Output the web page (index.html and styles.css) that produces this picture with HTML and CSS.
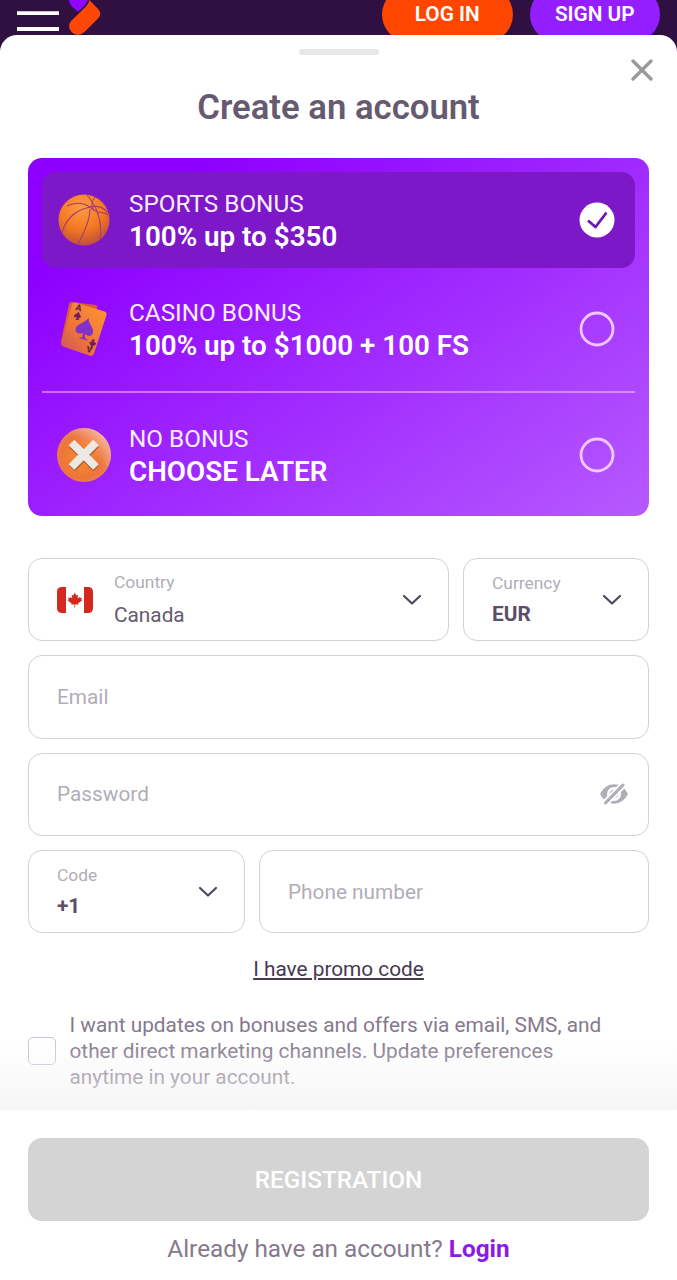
FILE: index.html
```html
<!DOCTYPE html>
<html lang="en">
<head>
<meta charset="utf-8">
<title>Create an account</title>
<link rel="stylesheet" href="styles.css">
</head>
<body>
<div class="page">
  <header class="topbar">
    <div class="brand">
      <svg class="menu" width="42" height="35" viewBox="0 0 42 35"><path d="M0 13.1H42M0 29H42" stroke="#fff" stroke-width="3.8"/></svg>
      <svg class="logo" width="34" height="35" viewBox="0 0 34 35">
        <path d="M1 0H19.5C19 3.5 15.5 7.5 10 11.5C5 8 1.5 4.5 1 0Z" fill="#8f05ff"/>
        <path d="M21.5 0L30.5 9.5Q34.2 14 30 18.5L16.5 32Q9.5 38 3.5 32Q-1 26.500 3 21L18 6.500Q21 3.500 21.500 0Z" fill="#ff4705"/>
      </svg>
    </div>
    <div class="actions">
      <button class="pill pill-login"><span>LOG IN</span></button>
      <button class="pill pill-signup"><span>SIGN UP</span></button>
    </div>
  </header>

  <main class="sheet">
    <div class="grabber"></div>
    <button class="close" aria-label="Close"><svg width="22" height="22" viewBox="0 0 22 22"><path d="M2 2L20 20M20 2L2 20" stroke="#999" stroke-width="3.3" stroke-linecap="round"/></svg></button>
    <h1 class="title"><span>Create an account</span></h1>

    <section class="bonuses">
      <div class="bonus bonus-active">
        <svg class="bonus-icon" width="56" height="56" viewBox="0 0 56 56">
          <defs><radialGradient id="ball" cx=".45" cy=".25" r=".8"><stop offset="0" stop-color="#ff9a45"/><stop offset=".55" stop-color="#f37a20"/><stop offset="1" stop-color="#b94742"/></radialGradient></defs>
          <circle cx="28" cy="28" r="25.500" fill="url(#ball)"/>
          <g fill="none" stroke="#a43b78" stroke-width="1.100">
            <path d="M6 41C9 28 19 18 34 15C42 13 49 16 52 21"/>
            <path d="M31 3C40 13 47 29 44 47"/>
            <path d="M39 5C34 12 35 18 42 20C47 21 50 21 52 23"/>
            <path d="M11 14C20 9 31 11 37 18"/>
            <path d="M34 17C34 30 27 41 22 53"/>
          </g>
        </svg>
        <div class="bonus-text"><div class="bonus-name">SPORTS BONUS</div><div class="bonus-value">100% up to $350</div></div>
        <svg class="radio" width="36" height="36" viewBox="0 0 36 36"><circle cx="18" cy="18" r="17.500" fill="#fff"/><path d="M9.800 19.300L16.500 25L26.800 11.500" fill="none" stroke="#6b17ba" stroke-width="2.800" stroke-linecap="round" stroke-linejoin="round"/></svg>
      </div>
      <div class="bonus">
        <svg class="bonus-icon" width="56" height="56" viewBox="0 0 56 56">
          <defs><linearGradient id="card" x1="1" y1="0" x2="0" y2="1"><stop offset="0" stop-color="#ff9833"/><stop offset=".6" stop-color="#ef7438"/><stop offset="1" stop-color="#c94e64"/></linearGradient></defs>
          <path d="M15 1L40 4Q42 5 41 8L34 50L6 43Q4.500 42 5 40L13 3Q13.500 1 15 1Z" fill="#d95b3c"/>
          <path d="M19 1.500L48.500 10.500Q51 11.500 50.500 14L38 52.500Q37 55.500 34 54.800L7 45.500Q4.500 44.500 5.500 41.500L16 3Q17 1 19 1.500Z" fill="url(#card)"/>
          <path d="M32.500 17C33 25 39 27 36.500 33C35 36 31 35 29 33L29 37L33 40L22.500 37L26.500 36L27 32C24 33 20 33 19.500 29C19 23 29 22 32.500 17Z" fill="#8232c8"/>
          <path d="M23 10.500C23 14 25.500 14 24.500 17L22.500 17L23 19H19.500L21 16.500L18 16C17.500 13 21 13 23 10.500ZM35.500 47C35 43 32.500 43 34 40.500L36 41L35.500 38.500H39L38 41L40 42C40 45 37 44 35.500 47Z" fill="#702060"/>
          <text class="card-letter" x="19" y="9" transform="rotate(14 19 9)">A</text>
          <text class="card-letter" x="37" y="46" transform="rotate(194 37 46)">A</text>
        </svg>
        <div class="bonus-text"><div class="bonus-name">CASINO BONUS</div><div class="bonus-value wide">100% up to $1000 + 100 FS</div></div>
        <svg class="radio" width="36" height="36" viewBox="0 0 36 36"><circle cx="18" cy="18" r="16" fill="none" stroke="#f0c8ff" stroke-width="2.800"/></svg>
      </div>
      <div class="divider"></div>
      <div class="bonus">
        <svg class="bonus-icon" width="56" height="56" viewBox="0 0 56 56">
          <defs><radialGradient id="coin" cx=".45" cy=".55" r=".58"><stop offset="0" stop-color="#f58d32"/><stop offset=".65" stop-color="#ee7438"/><stop offset="1" stop-color="#e9875f"/></radialGradient><linearGradient id="shine" x1=".4" y1=".7" x2=".95" y2=".15"><stop offset=".4" stop-color="#fff" stop-opacity="0"/><stop offset="1" stop-color="#fff" stop-opacity=".45"/></linearGradient></defs>
          <circle cx="28" cy="28" r="27" fill="url(#coin)"/><circle cx="28" cy="28" r="27" fill="url(#shine)"/>
          <path d="M16 17.500L40 41.500M40 17.500L16 41.500" stroke="#b65b2c" stroke-width="8"/>
          <path d="M15.500 15.500L40 40M40 15.500L15.500 40" stroke="#ece9e5" stroke-width="8"/>
        </svg>
        <div class="bonus-text"><div class="bonus-name">NO BONUS</div><div class="bonus-value">CHOOSE LATER</div></div>
        <svg class="radio" width="36" height="36" viewBox="0 0 36 36"><circle cx="18" cy="18" r="16" fill="none" stroke="#f0c8ff" stroke-width="2.800"/></svg>
      </div>
    </section>

    <form class="form">
      <div class="row">
        <div class="field country">
          <svg class="flag" width="36" height="26" viewBox="0 0 36 26"><path d="M5 0H9V26H5Q0 26 0 21V5Q0 0 5 0ZM27 0H31Q36 0 36 5V21Q36 26 31 26H27Z" fill="#d5281f"/><path d="M17.800 5.500L19.300 8.500L21 7.800L20.500 11.500L22.300 10L23 11L25 10.700L24.300 12.600L25 13.500L21 16.500L21.300 17.800L18.200 17.300V20.500H17.400V17.300L14.300 17.800L14.600 16.500L10.800 13.500L11.600 12.600L11 10.700L12.800 11L13.500 10L15.200 11.500L14.700 7.800L16.300 8.500Z" fill="#d5281f"/></svg>
          <div class="field-text"><span class="label">Country</span><span class="value">Canada</span></div>
          <svg class="chevron" width="20" height="12" viewBox="0 0 20 12"><path d="M2 2L10 9.500L18 2" fill="none" stroke="#51475d" stroke-width="2.200" stroke-linecap="round" stroke-linejoin="round"/></svg>
        </div>
        <div class="field currency">
          <div class="field-text"><span class="label">Currency</span><span class="value strong">EUR</span></div>
          <svg class="chevron" width="20" height="12" viewBox="0 0 20 12"><path d="M2 2L10 9.500L18 2" fill="none" stroke="#51475d" stroke-width="2.200" stroke-linecap="round" stroke-linejoin="round"/></svg>
        </div>
      </div>
      <div class="field"><span class="placeholder">Email</span></div>
      <div class="field">
        <span class="placeholder">Password</span>
        <svg class="eye" width="28" height="22" viewBox="0 0 28 22">
          <path d="M0 11Q5 1.300 14 1.300T28 11Q23 20.700 14 20.700T0 11Z" fill="#b1adb7"/>
          <circle cx="14" cy="11" r="7" fill="#fff"/>
          <circle cx="14" cy="11" r="4.300" fill="#b1adb7"/>
          <path d="M3.500 18.500L21 0.500M7.500 21.500L25 3.500" stroke="#fff" stroke-width="1.800"/>
          <path d="M5.500 20L23 2" stroke="#b1adb7" stroke-width="3" stroke-linecap="round"/>
        </svg>
      </div>
      <div class="row">
        <div class="field code">
          <div class="field-text"><span class="label">Code</span><span class="value strong">+1</span></div>
          <svg class="chevron" width="20" height="12" viewBox="0 0 20 12"><path d="M2 2L10 9.500L18 2" fill="none" stroke="#51475d" stroke-width="2.200" stroke-linecap="round" stroke-linejoin="round"/></svg>
        </div>
        <div class="field phone"><span class="placeholder">Phone number</span></div>
      </div>
    </form>

    <a class="promo"><span>I have promo code</span></a>
    <div class="consent">
      <span class="checkbox"></span>
      <p class="consent-text">I want updates on bonuses and offers via email, SMS, and<br>other direct marketing channels. Update preferences<br>anytime in your account.</p>
    </div>
  </main>

  <footer class="footer">
    <button class="register"><span>REGISTRATION</span></button>
    <p class="signin"><span>Already have an account? <b>Login</b></span></p>
  </footer>
</div>
</body>
</html>
```
FILE: styles.css
```css
* { box-sizing: border-box; }
body { margin: 0; background: #2f1040; font-family: Roboto, "Liberation Sans", sans-serif; }
button { border: 0; padding: 0; background: none; font-family: inherit; }
svg { display: block; flex: none; }
p, h1 { margin: 0; }
.page { width: 677px; height: 1280px; overflow: hidden; display: flex; flex-direction: column; }

.topbar { height: 35px; flex: none; overflow: hidden; display: flex; justify-content: space-between; padding: 0 17px; }
.brand { display: flex; gap: 9px; }
.actions { display: flex; gap: 17px; align-items: flex-end; margin-bottom: -7px; }
.pill { width: 130.500px; height: 55px; border-radius: 28px; color: #fff; font-size: 20.800px; font-weight: 600; line-height: 55px; }
.pill-login { background: #ff4600; }
.pill-signup { background: #931eff; }

.sheet { position: relative; height: 1075px; flex: none; background: #fff; border-radius: 17px 17px 0 0; padding: 14px 28px 0; display: flex; flex-direction: column; overflow: hidden; }
.sheet::after { content: ""; position: absolute; left: 0; right: 0; bottom: 0; height: 70px; background: linear-gradient(rgba(245,245,245,0), rgba(243,243,243,.8)); }
.grabber { width: 80px; height: 6px; border-radius: 3px; background: #e7e6e9; align-self: center; flex: none; }
.close { position: absolute; top: 24px; right: 24px; }
.title { margin-top: 31px; height: 43px; line-height: 43px; text-align: center; font-size: 34.700px; font-weight: 600; color: #665a70; }

.bonuses { margin-top: 29px; height: 358px; flex: none; border-radius: 14px; padding: 14px; background: linear-gradient(145deg, #8d00ff 16%, #b65aff 100%); display: flex; flex-direction: column; }
.bonus { height: 95.500px; flex: none; border-radius: 14px; padding: 0 20px 0 14px; display: flex; align-items: center; color: #fff; }
.bonus-active { background: #7d18c8; margin-bottom: 14px; }
.bonus-text { margin-left: 17px; flex: 1; white-space: nowrap; }
.bonus-name { font-size: 24.300px; line-height: 33px; font-weight: 400; color: #fbeeff; }
.bonus-value { font-size: 27.800px; line-height: 33px; font-weight: 600; }
.divider { height: 2px; flex: none; background: rgba(255,205,255,.5); margin: 14px 0 14px; }
.card-letter { font-size: 9px; font-weight: 700; fill: #60204e; }

.form { margin-top: 42px; display: flex; flex-direction: column; gap: 14px; flex: none; }
.row { display: flex; gap: 14px; }
.field { height: 83.300px; border: 1.700px solid #d2d1d4; border-radius: 14px; padding: 0 28px; display: flex; align-items: center; white-space: nowrap; }
.country { width: 421px; }
.currency { flex: 1; }
.code { width: 217px; }
.phone { flex: 1; }
.flag { margin-right: 21px; }
.field-text { flex: 1; display: flex; flex-direction: column; }
.label { font-size: 17.400px; line-height: 22px; color: #b1adb7; }
.value { font-size: 20.800px; line-height: 26px; margin-top: 9px; color: #655b70; }
.strong { font-weight: 700; color: #5b4e68; margin-top: 7px; }
.chevron { margin-right: -2px; }
.placeholder { font-size: 20.800px; color: #b1adb7; flex: 1; }
.eye { margin-right: -8px; }

.promo { margin-top: 23px; height: 26px; line-height: 26px; text-align: center; font-size: 20.800px; color: #453a50; text-decoration: underline; }
.consent { margin-top: 30px; display: flex; align-items: center; gap: 14px; }
.consent-text { font-size: 20.800px; line-height: 26px; color: #85798d; white-space: nowrap; }
.checkbox { width: 27.500px; height: 27.500px; border: 1.700px solid #c6c6d5; border-radius: 5px; background: #fff; flex: none; }

.footer { flex: 1; background: #fff; padding: 28px 28px 0; }
.register { display: block; width: 100%; height: 83px; border-radius: 14px; background: #d4d4d4; color: #fff; font-size: 24.300px; font-weight: 500; }
.signin { margin-top: 13px; height: 30px; line-height: 30px; text-align: center; font-size: 24.300px; color: #85798d; white-space: nowrap; }
.signin b { color: #8b1ae8; font-weight: 700; }
```
